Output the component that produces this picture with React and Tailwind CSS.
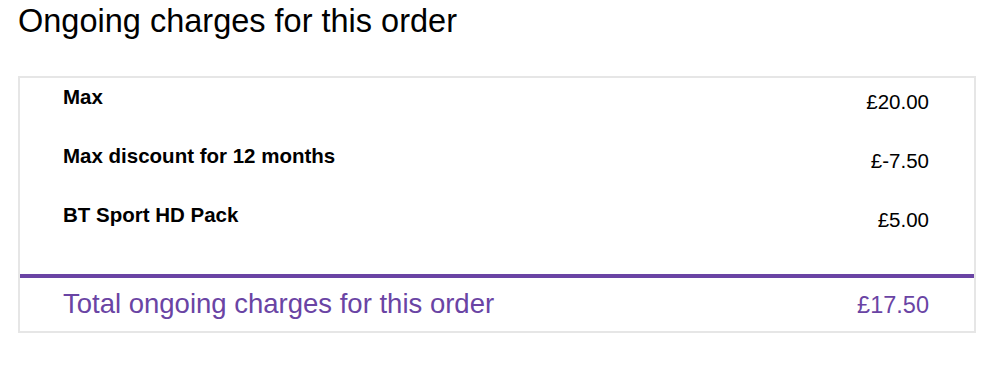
export default function App() {
  const rows = [
    { label: "Max", price: "£20.00" },
    { label: "Max discount for 12 months", price: "£-7.50" },
    { label: "BT Sport HD Pack", price: "£5.00" },
  ];
  return (
    <div className="w-[999px] h-[365px] bg-white pl-[18px] pr-[23px] pt-[2px] text-black" style={{ fontFamily: '"Liberation Sans", Arial, sans-serif' }}>
      <h1 className="text-[32.5px] leading-[38px] font-normal">Ongoing charges for this order</h1>
      <div className="mt-[36px] border-2 border-[#e6e6e6]">
        <div className="pl-[43px] pr-[45px] pt-[7px]">
          {rows.map((r) => (
            <div key={r.label} className="h-[59px] flex justify-between items-start">
              <span className="text-[20.5px] leading-[24px] font-bold">{r.label}</span>
              <span className="text-[20.5px] leading-[24px] pt-[5px]">{r.price}</span>
            </div>
          ))}
        </div>
        <div className="h-[12px]" />
        <div className="h-[4px] bg-[#6a44a4]" />
        <div className="pl-[43px] pr-[45px] pt-[10px] pb-[10px] flex justify-between items-baseline text-[#6a44a4]">
          <span className="text-[27.5px] leading-[32px]">Total ongoing charges for this order</span>
          <span className="text-[23.5px] leading-[32px]">£17.50</span>
        </div>
      </div>
    </div>
  );
}
